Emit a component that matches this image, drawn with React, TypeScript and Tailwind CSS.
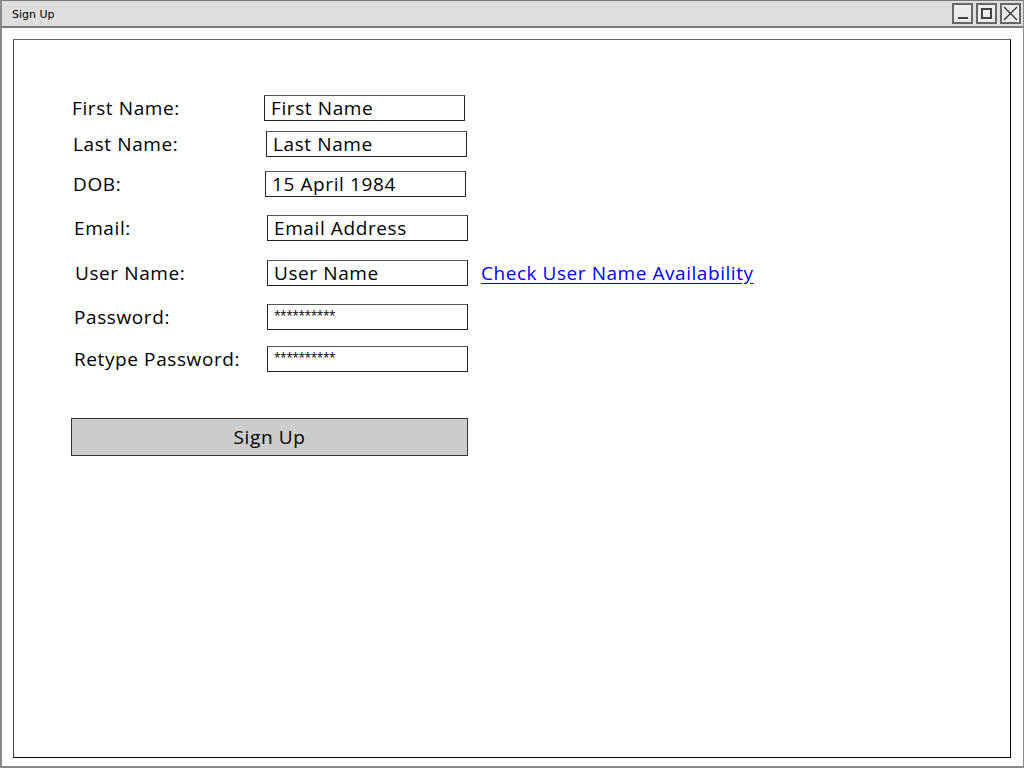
import React from "react";

const font = "font-['Open_Sans',sans-serif]";

function Field({ value, stars }: { value: string; stars?: boolean }) {
  return (
    <div className="w-[201px] h-[26px] border border-[#222] border-t-[#555] bg-white flex items-center pl-[6px] overflow-hidden">
      {stars ? (
        <span className="text-[12px] leading-none text-black tracking-[-0.5px] mb-[3px]">**********</span>
      ) : (
        <span className="text-[19px] leading-none text-black tracking-[0.6px]">{value}</span>
      )}
    </div>
  );
}

export default function App() {
  return (
    <div className={`w-[1024px] h-[768px] bg-white flex flex-col border-l-2 border-b-2 border-r border-[#8a8a8a] ${font}`}>
      <div className="h-[28px] shrink-0 bg-[#dedede] border-t border-b-2 border-[#7a7a7a] flex items-center justify-between pl-[10px] pr-[2px]">
        <span className="text-[11px] text-black font-['DejaVu_Sans',sans-serif] pt-[3px]">Sign Up</span>
        <div className="flex gap-[3px] pl-[1px]">
          <div className="w-[21px] h-[21px] border-2 border-[#666] bg-[#ececec] flex items-end justify-center pb-[3px]">
            <div className="w-[10px] h-[2px] bg-[#444]" />
          </div>
          <div className="w-[21px] h-[21px] border-2 border-[#666] bg-[#ececec] flex items-center justify-center">
            <div className="w-[11px] h-[11px] border-2 border-[#444]" />
          </div>
          <div className="w-[21px] h-[21px] border-2 border-[#666] bg-[#ececec] flex items-center justify-center">
            <svg width="15" height="15" viewBox="0 0 15 15">
              <path d="M1 1 L14 14 M14 1 L1 14" stroke="#333" strokeWidth="1.4" fill="none" />
            </svg>
          </div>
        </div>
      </div>
      <div className="flex-1 flex flex-col pt-[11px] pl-[11px] pr-[12px] pb-[8px]">
        <div className="flex-1 border border-black border-t-[#666] border-l-[#444] pl-[58px] pt-[55px]">
          <div className="flex flex-col text-[19px] tracking-[0.6px] text-black">
            <div className="flex items-center h-[26px]">
              <span className="w-[192px]">First Name:</span>
              <Field value="First Name" />
            </div>
            <div className="flex items-center h-[26px] mt-[10px] pl-[1px]">
              <span className="w-[193px]">Last Name:</span>
              <Field value="Last Name" />
            </div>
            <div className="flex items-center h-[26px] mt-[14px] pl-[1px]">
              <span className="w-[192px]">DOB:</span>
              <Field value="15 April 1984" />
            </div>
            <div className="flex items-center h-[26px] mt-[18px] pl-[2px]">
              <span className="w-[193px]">Email:</span>
              <Field value="Email Address" />
            </div>
            <div className="flex items-center h-[26px] mt-[19px] pl-[3px]">
              <span className="w-[192px]">User Name:</span>
              <Field value="User Name" />
              <a href="#" className="ml-[13px] text-[19px] tracking-[0.55px] text-[#0000ff] underline underline-offset-[3px]">
                Check User Name Availability
              </a>
            </div>
            <div className="flex items-center h-[26px] mt-[18px] pl-[2px]">
              <span className="w-[193px]">Password:</span>
              <Field value="" stars />
            </div>
            <div className="flex items-center h-[26px] mt-[16px] pl-[2px]">
              <span className="w-[193px]">Retype Password:</span>
              <Field value="" stars />
            </div>
            <button className="mt-[46px] -ml-[1px] w-[397px] h-[38px] bg-[#cccccc] border border-[#333] text-[19px] tracking-[0.6px] text-black flex items-center justify-center">
              Sign Up
            </button>
          </div>
        </div>
      </div>
    </div>
  );
}
